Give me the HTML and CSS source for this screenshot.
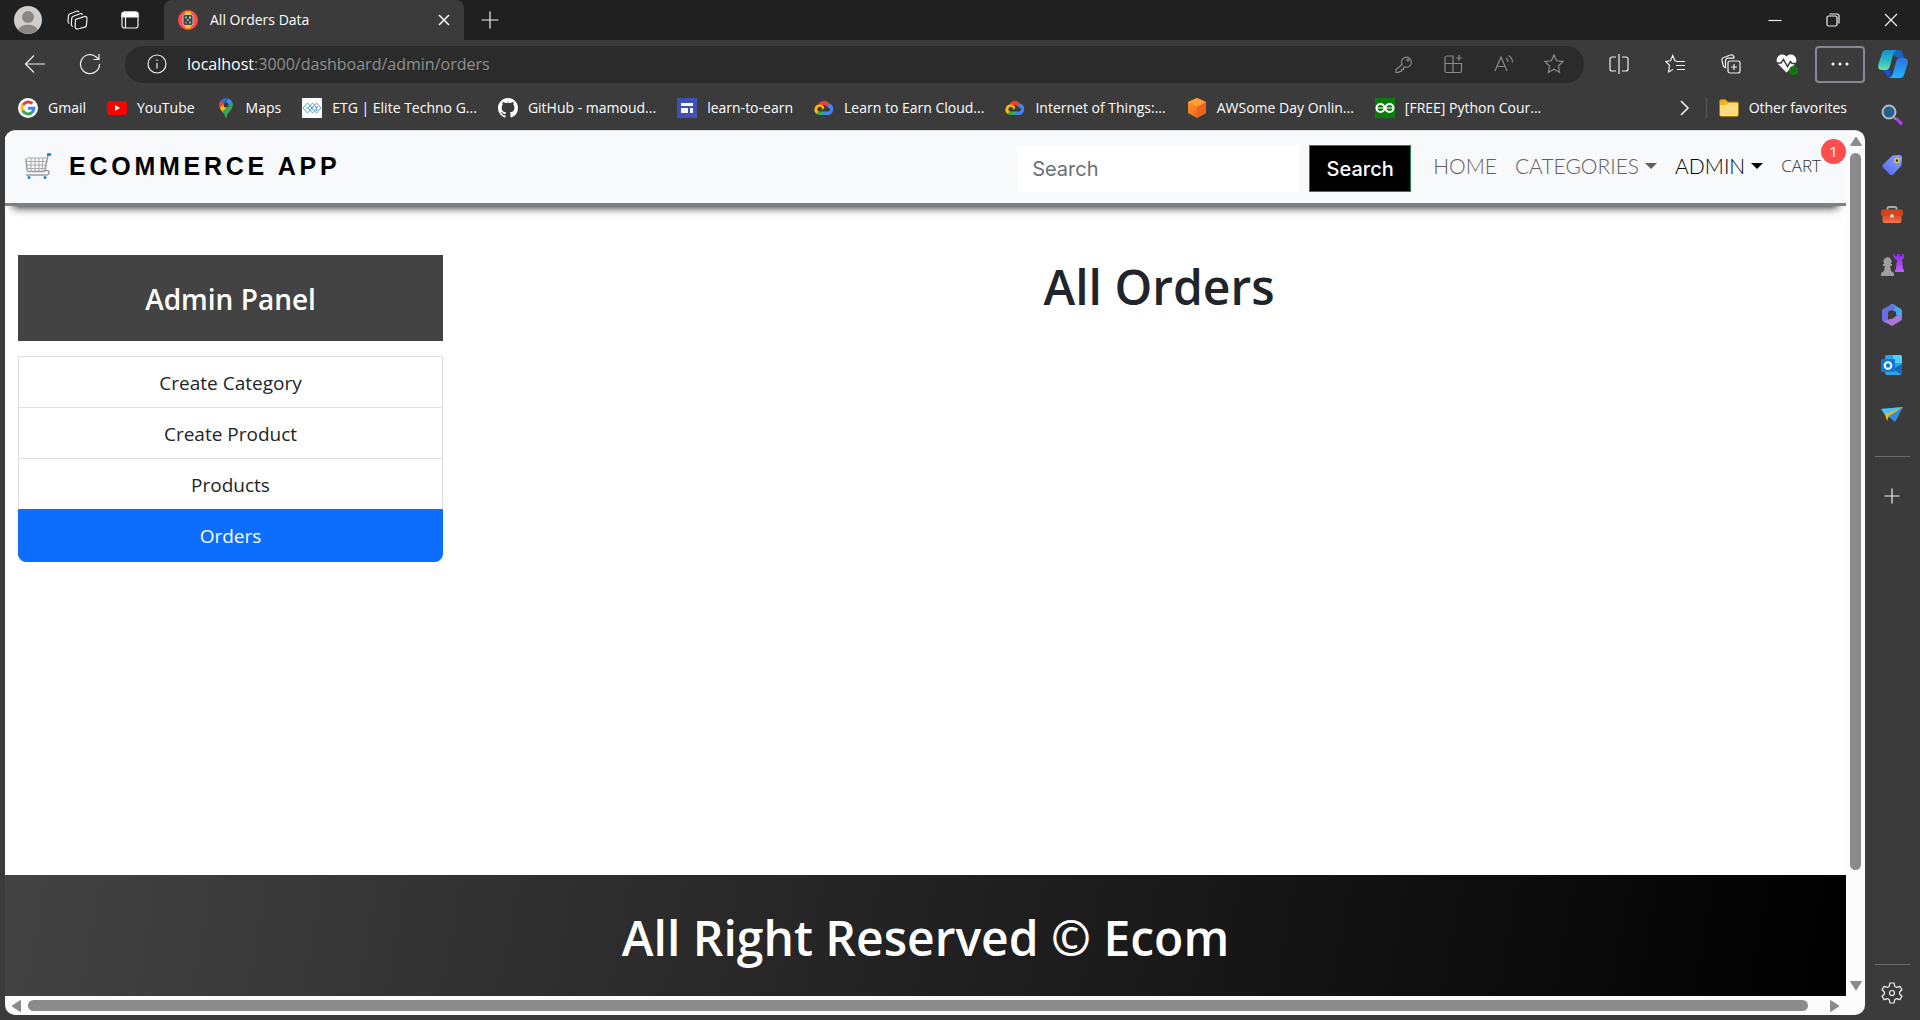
FILE: index.html
```html
<!DOCTYPE html>
<html lang="en">
<head>
<meta charset="utf-8">
<meta name="viewport" content="width=device-width, initial-scale=1">
<title>All Orders Data</title>
<link rel="stylesheet" href="styles.css">
</head>
<body class="browser">
<svg class="defs" width="0" height="0" aria-hidden="true">
  <defs>
    <linearGradient id="cpA" x1="0" y1="0" x2="0" y2="1"><stop offset="0" stop-color="#1490d0"/><stop offset=".5" stop-color="#2bb5c8"/><stop offset="1" stop-color="#6fe59a"/></linearGradient>
    <linearGradient id="cpB" x1="0" y1="0" x2="0" y2="1"><stop offset="0" stop-color="#2f6fe0"/><stop offset="1" stop-color="#1fb6ff"/></linearGradient>
    <linearGradient id="tag" x1="1" y1="0" x2="0" y2="1"><stop offset="0" stop-color="#7fa8ff"/><stop offset="1" stop-color="#5a62f2"/></linearGradient>
    <linearGradient id="case" x1="0" y1="0" x2="0" y2="1"><stop offset="0" stop-color="#d2451a"/><stop offset="1" stop-color="#f4714a"/></linearGradient>
    <linearGradient id="rook" x1="0" y1="0" x2="0" y2="1"><stop offset="0" stop-color="#8a2be8"/><stop offset="1" stop-color="#c65bff"/></linearGradient>
    <linearGradient id="aws" x1="0" y1="0" x2="1" y2="1"><stop offset="0" stop-color="#ff9a2e"/><stop offset="1" stop-color="#e8591a"/></linearGradient>
    <symbol id="gcloud" viewBox="0 0 20 20">
      <path d="M4 7.500A6.300 6.300 0 0 1 15.500 6L12.800 8.500A3.800 3.800 0 0 0 7.500 8Z" fill="#ea4335"/>
      <path d="M15.300 5.500A6 6 0 0 1 14.500 17H10v-3.500h4.500a1.800 1.800 0 0 0 .6-3.400L12.800 8.500Z" fill="#4285f4"/>
      <path d="M10 17H5.500a5.200 5.200 0 0 1-3-1L5 13.500h5Z" fill="#34a853"/>
      <path d="M2.500 16A5.200 5.200 0 0 1 5.500 6.600c2.400 0 4.200 1.300 5 3.100L8 12.200A2.400 2.400 0 1 0 5 13.500Z" fill="#fbbc05"/>
    </symbol>
  </defs>
</svg>

<header class="tabstrip">
  <button class="icon-btn avatar" aria-label="Profile"><svg width="28" height="28" viewBox="0 0 28 28"><circle cx="14" cy="14" r="14" fill="#d0cdca"/><circle cx="14" cy="11" r="6" fill="#8a8684"/><path d="M4 23.500a11 8 0 0 1 20 0A14 14 0 0 1 4 23.500Z" fill="#8a8684"/></svg></button>
  <button class="icon-btn" aria-label="Workspaces"><svg width="24" height="24" viewBox="0 0 24 24" class="line"><path d="M9.500 11.500 18 8.600a2 2 0 0 1 3 1.800l-.6 7a2 2 0 0 1-1.500 1.800L11.500 21a2 2 0 0 1-2.300-2l.3-7.500Z"/><path d="M7 18.500a2 2 0 0 1-1.700-2l.4-6a2.500 2.500 0 0 1 1.600-2.200l7-2.600a2 2 0 0 1 2.400.8"/><path d="M3.500 15.500A2 2 0 0 1 2 13.300L2.400 8A2.500 2.500 0 0 1 4 5.800l6.500-2.500a2 2 0 0 1 2.500.8"/></svg></button>
  <button class="icon-btn" aria-label="Tab actions"><svg width="20" height="20" viewBox="0 0 20 20" class="line"><rect x="2" y="2" width="16" height="16" rx="2.500"/><path d="M2 7V4a2 2 0 0 1 2-2h12a2 2 0 0 1 2 2v3Z" fill="#fff"/><path d="M5.500 7v11"/></svg></button>
  <div class="tab">
    <svg width="20" height="20" viewBox="0 0 20 20"><circle cx="10" cy="10" r="10" fill="#ff4b4b"/><path d="M7 1.500h6V5H7ZM7 15h6v3.500H7Z" fill="#ffc400"/><rect x="5" y="4.500" width="10" height="11" rx="2" fill="#394452" stroke="#c9c3b4"/><path d="M7 6.500h2v2H7Zm4 5h2v2h-2Z" fill="#6fcf5b"/><path d="M11 6.500h2v2h-2Z" fill="#f6c945"/><path d="M7 11.500h2v2H7Z" fill="#e65346"/><path d="M9 9h2v2H9Z" fill="#58a9e8"/></svg>
    <span class="tab-title">All Orders Data</span>
    <button class="icon-btn" aria-label="Close tab"><svg width="12" height="12" viewBox="0 0 12 12" class="line bold"><path d="m1 1 10 10M11 1 1 11"/></svg></button>
  </div>
  <button class="icon-btn new-tab" aria-label="New tab"><svg width="18" height="18" viewBox="0 0 18 18" class="line"><path d="M9 .5v17M.5 9h17"/></svg></button>
  <div class="window-controls">
    <button class="icon-btn" aria-label="Minimize"><svg width="14" height="14" viewBox="0 0 14 14" class="line"><path d="M.5 7.500h13"/></svg></button>
    <button class="icon-btn" aria-label="Restore"><svg width="14" height="14" viewBox="0 0 14 14" class="line"><rect x="1" y="3" width="10" height="10" rx="1.500"/><path d="M3.500 1H11a2 2 0 0 1 2 2v7.500"/></svg></button>
    <button class="icon-btn" aria-label="Close"><svg width="14" height="14" viewBox="0 0 14 14" class="line"><path d="m1 1 12 12M13 1 1 13"/></svg></button>
  </div>
</header>

<div class="toolbar">
  <button class="icon-btn nav-btn" aria-label="Back"><svg width="22" height="20" viewBox="0 0 22 20" class="line"><path d="M21 10H1.500M10 1.500 1.500 10l8.500 8.500"/></svg></button>
  <button class="icon-btn nav-btn" aria-label="Refresh"><svg width="22" height="22" viewBox="0 0 22 22" class="line"><path d="M20.500 11A9.500 9.500 0 1 1 17.500 4.200L19.500 6M20 1v5.500h-5.500"/></svg></button>
  <form class="address">
    <svg width="20" height="20" viewBox="0 0 20 20" class="line"><circle cx="10" cy="10" r="9"/><path d="M10 9v5.500M10 5.500V7"/></svg>
    <p class="url"><span class="host">localhost</span>:3000/dashboard/admin/orders</p>
    <button type="button" class="icon-btn dim" aria-label="Passwords"><svg width="20" height="20" viewBox="0 0 20 20" class="line"><path d="M8 10.500A5 5 0 1 1 11 13l-1.500.5v2H7.500v2H5.500l-1 1H2v-3Z"/><circle cx="14" cy="6" r="1"/></svg></button>
    <button type="button" class="icon-btn dim" aria-label="Apps"><svg width="20" height="20" viewBox="0 0 20 20" class="line"><path d="M9 9.500H1V4a2 2 0 0 1 2-2h6v16.500M1 9.500V17a1.500 1.500 0 0 0 1.500 1.500H16a1.500 1.500 0 0 0 1.500-1.500V9.500H9M15 1v6M12 4h6"/></svg></button>
    <button type="button" class="icon-btn dim" aria-label="Read aloud"><svg width="20" height="20" viewBox="0 0 20 20" class="line"><path d="m1 17 6-14 6 14M3 12.500h8M12 4c1.500 1 2 2.500 2 4M14.500 1.500C17 3 18.500 5.500 18.500 8.500"/></svg></button>
    <button type="button" class="icon-btn dim" aria-label="Add to favorites"><svg width="20" height="20" viewBox="0 0 20 20" class="line"><path d="m10 1 2.700 5.800 6.300.8-4.600 4.400 1.200 6.400L10 15.300 4.400 18.400l1.200-6.400L1 7.600l6.300-.8Z"/></svg></button>
  </form>
  <div class="tools">
    <button class="icon-btn" aria-label="Split screen"><svg width="20" height="20" viewBox="0 0 20 20" class="line"><path d="M7 3H3a2 2 0 0 0-2 2v10a2 2 0 0 0 2 2h4M13 3h4a2 2 0 0 1 2 2v10a2 2 0 0 1-2 2h-4M10 0v20"/></svg></button>
    <button class="icon-btn" aria-label="Favorites"><svg width="20" height="20" viewBox="0 0 20 20" class="line"><path d="m12 7.500-2-.7L7.700 1.500 5.500 6.800.8 7.500l3.700 3.800-1 6.700 4.500-2.500M12 7.500h8M11 11.500h9M12 15.500h8"/></svg></button>
    <button class="icon-btn" aria-label="Collections"><svg width="20" height="20" viewBox="0 0 20 20" class="line"><rect x="7" y="7" width="12" height="12" rx="2"/><path d="M13 10v6M10 13h6M4.500 14 3.200 13a2 2 0 0 1-1-1.400L1 6.500A2.500 2.500 0 0 1 2.700 3.500L9.500 1a2.500 2.500 0 0 1 3.200 1.500l.6 1.700M4.500 14V7A2.500 2.500 0 0 1 7 4.200h6"/></svg></button>
    <button class="icon-btn" aria-label="Browser essentials"><svg width="22" height="22" viewBox="0 0 22 22"><path d="M10.500 19.500 2 11A5.500 5.500 0 0 1 10.500 3.500 5.500 5.500 0 0 1 19 11Z" fill="#fff"/><path d="M0 10h5l2.500-3.500 4 7 3-5 1.500 2h5" fill="none" stroke="#3b3b3b" stroke-width="1.500"/><circle cx="17.500" cy="17.500" r="4.500" fill="#107c10"/><path d="m15.500 17.500 1.500 1.500 2.500-3" fill="none" stroke="#3b3b3b"/></svg></button>
  </div>
  <button class="more" aria-label="Settings and more"><svg width="18" height="4" viewBox="0 0 18 4" fill="#fff"><circle cx="2" cy="2" r="1.500"/><circle cx="9" cy="2" r="1.500"/><circle cx="16" cy="2" r="1.500"/></svg></button>
  <button class="icon-btn copilot" aria-label="Copilot"><svg width="30" height="28" viewBox="0 0 30 28"><path d="M13 4 17 0h4q3 0 4 4l1 4h-6Z" fill="#1464c0"/><path d="m4 20 9 0-1 8q-3-1-4-4Z" fill="#1a4fd0"/><path d="M8 0h11q-3 1-4 5l-3 11q-1 4-4 4H4q-5 0-3.500-6L4 3q1-3 4-3Z" fill="url(#cpA)"/><path d="M22 28H11q3-1 4-5l3-11q1-4 4-4h4q5 0 3.500 6L26 25q-1 3-4 3Z" fill="url(#cpB)"/></svg></button>
</div>

<div class="workspace">
  <div class="left">
    <nav class="bookmarks" aria-label="Favorites bar">
      <a href="#"><svg width="20" height="20" viewBox="0 0 20 20"><circle cx="10" cy="10" r="10" fill="#fff"/><g fill="none" stroke-width="3"><path d="M5 7a6 6 0 0 1 9.300-1.300" stroke="#ea4335"/><path d="M5 13.200A6 6 0 0 1 5 6.800" stroke="#fbbc05"/><path d="M14 14.500a6 6 0 0 1-9.200-1.700" stroke="#34a853"/><path d="M10 10.200h6a6 6 0 0 1-2.200 4.400" stroke="#4285f4"/></g></svg>Gmail</a>
      <a href="#"><svg width="20" height="20" viewBox="0 0 20 20"><rect y="3" width="20" height="14" rx="3.500" fill="#f00"/><path d="M8 7v6l5-3Z" fill="#fff"/></svg>YouTube</a>
      <a href="#"><svg width="20" height="20" viewBox="0 0 20 20"><path d="M4.600 2.600A7 7 0 0 1 12 .4L7.800 5.500Z" fill="#1a73e8"/><path d="M12 .4A7 7 0 0 1 16.300 4L10 11.500 7.500 9Z" fill="#4285f4"/><path d="M4.600 2.600 7.800 5.500 3.800 10A7 7 0 0 1 4.600 2.600Z" fill="#ea4335"/><path d="M3.800 10 8 5.200l4.500 3.500L6.300 14Z" fill="#fbbc05"/><path d="M16.300 4c1.500 4-.3 6.700-2.700 9.500C12 15.500 11 17 10.700 19.500H9.300C9 17 7.700 15.700 6.300 14Z" fill="#34a853"/><circle cx="10" cy="7" r="2.500" fill="#3b3b3b"/></svg>Maps</a>
      <a href="#"><svg width="20" height="20" viewBox="0 0 20 20"><path d="M0 0h20v20H0Z" fill="#fff"/><path d="m1 10 4.500-5 4.500 5-4.500 5Zm5 0 4.500-5L15 10l-4.500 5Zm4 0 4.500-5 4.500 5-4.500 5ZM4 10h3M10 8v4m3-3h3m-1.500 0v4" fill="none" stroke="#5b9fd8"/></svg>ETG | Elite Techno G...</a>
      <a href="#"><svg width="20" height="20" viewBox="0 0 16 16"><path fill="#fff" d="M8 0C3.580 0 0 3.580 0 8c0 3.540 2.290 6.530 5.470 7.590.4.070.55-.17.55-.38 0-.19-.01-.82-.01-1.490-2.010.37-2.530-.49-2.690-.94-.09-.23-.48-.94-.82-1.130-.28-.15-.68-.52-.01-.53.63-.01 1.080.58 1.230.82.72 1.210 1.870.87 2.330.66.07-.52.28-.87.51-1.070-1.780-.2-3.640-.89-3.640-3.950 0-.87.31-1.590.82-2.150-.08-.2-.36-1.020.08-2.120 0 0 .67-.21 2.200.82.64-.18 1.320-.27 2-.27s1.360.09 2 .27c1.530-1.040 2.200-.82 2.200-.82.44 1.100.16 1.920.08 2.120.51.56.82 1.270.82 2.150 0 3.070-1.870 3.750-3.650 3.950.29.25.54.73.54 1.480 0 1.070-.01 1.930-.01 2.200 0 .21.15.46.55.38A8.010 8.010 0 0 0 16 8c0-4.420-3.580-8-8-8Z"/></svg>GitHub - mamoud...</a>
      <a href="#"><svg width="20" height="20" viewBox="0 0 20 20"><path d="M0 0h20v20H0Z" fill="#3f51b5"/><path d="M4 5h12v3H4Zm0 5h7v5H4Zm9 0h3v5h-3Z" fill="#fff"/></svg>learn-to-earn</a>
      <a href="#"><svg width="20" height="20"><use href="#gcloud"/></svg>Learn to Earn Cloud...</a>
      <a href="#"><svg width="20" height="20"><use href="#gcloud"/></svg>Internet of Things:...</a>
      <a href="#"><svg width="20" height="20" viewBox="0 0 20 20"><path d="m10 0 9 4v11l-9 5-9-5V4Z" fill="url(#aws)"/><path d="m10 8.500 9-4.500v11l-9 5Z" fill="#e8641c"/><path d="m1 4 9-4 9 4-9 4.500Z" fill="#ffa033"/></svg>AWSome Day Onlin...</a>
      <a href="#"><svg width="20" height="20" viewBox="0 0 20 20"><path d="M0 0h20v20H0Z" fill="#0a7d0a"/><path d="M2 10h7M11 10h7" stroke="#fff" stroke-width="1"/><circle cx="5.500" cy="10" r="4" fill="none" stroke="#fff" stroke-width="2"/><circle cx="14.500" cy="10" r="4" fill="none" stroke="#fff" stroke-width="2"/></svg>[FREE] Python Cour...</a>
      <button class="icon-btn overflow" aria-label="More favorites"><svg width="10" height="16" viewBox="0 0 10 16" class="line bold"><path d="m1 1 7 7-7 7"/></svg></button>
      <a href="#" class="other"><svg width="20" height="20" viewBox="0 0 20 20"><path d="M.5 3.500a2 2 0 0 1 2-2h4L9 4h9a1.500 1.500 0 0 1 1.500 1.500v11A2 2 0 0 1 17.500 18.500h-15a2 2 0 0 1-2-2Z" fill="#f2b21d" stroke="#a87510"/><path d="M1 7h6l2.500-2H19v11.500a1.500 1.500 0 0 1-1.500 1.500h-15A1.500 1.500 0 0 1 1 16.500Z" fill="#ffdd7d"/></svg>Other favorites</a>
    </nav>

    <div class="viewport">
      <div class="page">
        <nav class="navbar">
          <a href="#" class="brand"><svg width="26" height="26" viewBox="0 0 26 26" fill="none"><path d="M1 5.500 2 17q.2 1.500 1.500 1.500h16L23 2.500" stroke="#9b9b9b" stroke-width="1.500"/><path d="M2 5h19.500M2 8.500h18.500M2 12h18M2.500 15.500H19M6 5v13M10 5v13M14 5v13M18 5l-1 13" stroke="#aaa"/><path d="M19.500 17.500h3q2.500 1 1 3.500-.5 1-2 1H1" stroke="#9b9b9b" stroke-width="1.500"/><path d="M22 1.500h4" stroke="#0a7fd0" stroke-width="2.500"/><circle cx="4" cy="24.500" r="1.500" fill="#1b83cf"/><circle cx="20" cy="24.500" r="1.500" fill="#1b83cf"/></svg>ECOMMERCE APP</a>
          <form class="search">
            <input type="search" placeholder="Search" aria-label="Search">
            <button type="button">Search</button>
          </form>
          <ul class="menu">
            <li><a href="#">HOME</a></li>
            <li><a href="#" class="dropdown">CATEGORIES</a></li>
            <li><a href="#" class="dropdown current">ADMIN</a></li>
            <li><a href="#" class="cart">CART<span class="badge">1</span></a></li>
          </ul>
        </nav>
        <div class="dashboard">
          <aside class="admin">
            <h4>Admin Panel</h4>
            <div class="list">
              <a href="#">Create Category</a>
              <a href="#">Create Product</a>
              <a href="#">Products</a>
              <a href="#" class="active">Orders</a>
            </div>
          </aside>
          <main class="orders"><h1>All Orders</h1></main>
        </div>
        <footer class="footer"><h1>All Right Reserved © Ecom</h1></footer>
      </div>
      <div class="vbar" aria-hidden="true">
        <svg width="12" height="10" viewBox="0 0 12 10"><path d="M6 1 11.500 9.500H.5Z" fill="#8b8b8b" stroke="#8b8b8b" stroke-linejoin="round"/></svg>
        <span class="thumb"></span>
        <svg width="12" height="10" viewBox="0 0 12 10"><path d="M6 9 .5.500h11Z" fill="#8b8b8b" stroke="#8b8b8b" stroke-linejoin="round"/></svg>
      </div>
      <div class="hbar" aria-hidden="true">
        <svg width="10" height="12" viewBox="0 0 10 12"><path d="M1 6 9.500.5v11Z" fill="#8b8b8b" stroke="#8b8b8b" stroke-linejoin="round"/></svg>
        <span class="thumb"></span>
        <svg width="10" height="12" viewBox="0 0 10 12"><path d="M9 6 .5 11.500V.5Z" fill="#8b8b8b" stroke="#8b8b8b" stroke-linejoin="round"/></svg>
      </div>
    </div>
  </div>

  <aside class="rail" aria-label="Sidebar">
    <button class="icon-btn" aria-label="Search"><svg width="22" height="22" viewBox="0 0 22 22"><path d="m14 15 2-2 6 6-2.500 2.500Z" fill="#b03df0"/><path d="m12.500 13 2.500 2.500" stroke="#999" stroke-width="2"/><circle cx="8" cy="8" r="6.500" fill="#21628c" stroke="#b8b8b8" stroke-width="2"/></svg></button>
    <button class="icon-btn" aria-label="Shopping"><svg width="22" height="22" viewBox="0 0 22 22"><path d="M11.500 1.500 18 1q3 0 3 3l-.5 6.500q0 1-1 2L12 20.500q-1.500 1.500-3 0l-7-7q-1.500-1.500 0-3Z" fill="url(#tag)"/><circle cx="16" cy="6.500" r="2" fill="#222" stroke="#f5c927" stroke-width="1.500"/></svg></button>
    <button class="icon-btn" aria-label="Tools"><svg width="22" height="22" viewBox="0 0 22 22"><path d="M6.500 6V4.500q0-1.500 1.500-1.500h6q1.500 0 1.500 1.500V6" fill="none" stroke="#aaa" stroke-width="2"/><path d="M1.500 10h19v7q0 2-2 2h-15q-2 0-2-2Z" fill="url(#case)"/><path d="M0 7q0-1.500 1.500-1.500h19Q22 5.500 22 7v4.500H0Z" fill="#cf4418"/><circle cx="11" cy="12" r="2" fill="#ccc"/></svg></button>
    <button class="icon-btn" aria-label="Games"><svg width="24" height="24" viewBox="0 0 24 24"><path d="M13 1h2v2h2V1h3v2h2V1h2v4l-2 2 1 9 1 1v2h-9v-2l1-1 1-9-3-2Z" fill="url(#rook)"/><path d="M1 23v-2q0-2 3-3l1-5H3v-2h1.500a4 4 0 1 1 6 0H12v2h-2l1 5q3 1 3 3v2Z" fill="#9f9f9f"/></svg></button>
    <button class="icon-btn" aria-label="Microsoft 365"><svg width="22" height="22" viewBox="0 0 22 22"><path d="M10 0q1-.5 2 0l8 5q1 .7 1 2v7.500L15 11V8L7.500 4Z" fill="#45a6ee"/><path d="m10.500 0-8.500 5Q1 5.700 1 7v8q0 1.500 1 2l3 2 3-3-1-1V8.500L15 4Z" fill="#6a6fe0"/><path d="m2 17 8 4.500q1 .5 2 0l8-5q1-.6 1-2.500l-2-2.500-4 .5-8 4Z" fill="#a879d8"/><path d="m7 8 2-1.500 6 4V12l-4 3-4-2.500Z" fill="#3b3b3b"/></svg></button>
    <button class="icon-btn" aria-label="Outlook"><svg width="22" height="22" viewBox="0 0 22 22"><path d="M4 3q0-2 2-2h13q2 0 2 2v16q0 2-2 2H6q-2 0-2-2Z" fill="#2aa5e8"/><path d="M12 1h7q2 0 2 2v6h-9Z" fill="#50d0ff"/><path d="m21 10-9 5 9 6Z" fill="#1368b4"/><rect y="5" width="14" height="13" rx="1" fill="#0f78d4"/><circle cx="7" cy="11.500" r="3.300" fill="none" stroke="#fff" stroke-width="2"/></svg></button>
    <button class="icon-btn" aria-label="Drop"><svg width="22" height="18" viewBox="0 0 22 18"><path d="M0 3 22 1 14 16 8 11Z" fill="#2f8de8"/><path d="M0 3 22 1 4 9Z" fill="#4cc2ff"/><path d="M22 1 4 8.500 6 15 8 10Z" fill="#f3b617"/></svg></button>
    <hr>
    <button class="icon-btn" aria-label="Customize"><svg width="16" height="16" viewBox="0 0 16 16" class="line"><path d="M8 .5v15M.5 8h15"/></svg></button>
    <hr class="push">
    <button class="icon-btn" aria-label="Settings"><svg width="22" height="22" viewBox="0 0 22 22" class="line"><path d="M9 1h4l.7 3.200 2 1.200 3.200-1L21 7.800 18.600 10v2l2.400 2.200-2.100 3.400-3.200-1-2 1.200L13 21H9l-.7-3.200-2-1.200-3.200 1L1 14.200 3.400 12v-2L1 7.800l2.100-3.400 3.200 1 2-1.200Z" stroke-linejoin="round"/><circle cx="11" cy="11" r="2.500"/></svg></button>
  </aside>
</div>
</body>
</html>
```
FILE: styles.css
```css
* { box-sizing: border-box; }

body, h1, h4, p, ul, hr { margin: 0; }

.browser {
  display: flex;
  flex-direction: column;
  min-height: 100vh;
  background: #3b3b3b;
  color: #fff;
  font: 14px/20px "Open Sans", "Noto Sans", sans-serif;
}

.defs { position: absolute; }
svg { display: block; flex: none; }
a { color: inherit; text-decoration: none; }
button { font: inherit; color: inherit; cursor: pointer; }

.icon-btn {
  display: flex;
  align-items: center;
  justify-content: center;
  flex: none;
  padding: 0;
  border: 0;
  background: none;
}

.line { fill: none; stroke: #f0f0f0; stroke-width: 1.2; }
.line.bold { stroke-width: 1.6; }
.dim .line { stroke: #8a8a8a; }

/* Tab strip */
.tabstrip {
  display: flex;
  height: 40px;
  background: #202020;
}
.tabstrip > .icon-btn { width: 52px; }
.tabstrip > .avatar { padding-left: 4px; }
.tab {
  display: flex;
  align-items: center;
  gap: 12px;
  width: 300px;
  margin-left: 8px;
  padding: 0 14px;
  border-radius: 8px 8px 0 0;
  background: #3b3b3b;
}
.tab-title { flex: 1; }
.window-controls { display: flex; margin-left: auto; }
.window-controls .icon-btn { width: 58px; }

/* Toolbar */
.toolbar {
  display: flex;
  align-items: center;
  height: 48px;
  padding: 0 12px 0 7px;
}
.nav-btn { width: 55px; }
.address {
  display: flex;
  flex: 1;
  align-items: center;
  height: 37px;
  margin-left: 8px;
  padding: 0 5px 0 22px;
  border-radius: 18px;
  background: #2b2b2b;
}
.url {
  flex: 1;
  margin-left: 20px;
  color: #8f8f8f;
  font-size: 16px;
  line-height: 24px;
}
.host { color: #fff; }
.address .icon-btn { width: 50px; }
.tools { display: flex; margin-left: 7px; }
.tools .icon-btn { width: 56px; }
.more {
  display: flex;
  align-items: center;
  justify-content: center;
  width: 50px;
  height: 37px;
  padding: 0;
  border: 2px solid #858a92;
  border-radius: 4px;
  background: none;
}
.copilot { width: 30px; margin-left: 13px; }

.workspace { display: flex; flex: 1; }
.left {
  display: flex;
  flex: 1;
  flex-direction: column;
  min-width: 0;
  padding: 0 0 5px 5px;
}

/* Favorites bar */
.bookmarks {
  display: flex;
  align-items: center;
  gap: 21px;
  height: 42px;
  padding: 0 18px 2px 13px;
  white-space: nowrap;
}
.bookmarks a { display: flex; align-items: center; gap: 10px; }
.bookmarks .overflow { margin-left: auto; width: 10px; }
.bookmarks .other { margin-left: -5px; padding-left: 12px; border-left: 1px solid #5c5c5c; }

/* Web page viewport with its scrollbars */
.viewport {
  display: grid;
  flex: 1;
  grid-template-columns: minmax(0, 1fr) 19px;
  grid-template-rows: 1fr 19px;
  overflow: hidden;
  border-top: 1px solid #dcdde0;
  border-radius: 10px;
  background: #fcfcfc;
}
.page {
  display: flex;
  flex-direction: column;
  overflow: hidden;
  background: #fff;
  color: #212529;
}
.vbar, .hbar { display: flex; align-items: center; }
.vbar { flex-direction: column; gap: 7px; padding: 5px 0; }
.hbar { gap: 7px; padding: 0 6px; }
.thumb { flex: 1; border-radius: 6px; background: #8b8b8b; }
.vbar .thumb { width: 11px; margin-bottom: 104px; }
.hbar .thumb { height: 11px; margin-right: 15px; }

/* Site navigation */
.navbar {
  display: flex;
  align-items: flex-start;
  height: 75px;
  padding: 14px 0 0 20px;
  border-bottom: 3px solid #808080;
  background: #f8f9fb;
  box-shadow: 0 10px 8px -8px #333;
}
.brand {
  display: flex;
  align-items: center;
  gap: 18px;
  height: 42px;
  margin-right: auto;
  color: #000;
  font: bold 25px/30px "Liberation Sans", Arial, sans-serif;
  letter-spacing: 0.15em;
}
.search { display: flex; gap: 10px; }
.search input,
.search button {
  height: 47px;
  border-radius: 0;
  font: 20px/30px Inter, sans-serif;
}
.search input {
  width: 282px;
  padding: 0 15px;
  border: 0;
  background: #fff;
  appearance: none;
}
.search input::placeholder { color: #6b6f73; opacity: 1; }
.search button {
  width: 102px;
  padding: 0;
  border: 1px solid #198754;
  background: #000;
  color: #fff;
  font-weight: 500;
}
.menu {
  display: flex;
  gap: 18px;
  padding: 0 25px 0 22px;
  list-style: none;
  color: #5f6062;
  font: 300 21px/42px Lato, sans-serif;
}
.menu a { display: flex; align-items: center; gap: 6px; }
.dropdown::after {
  content: "";
  border: 6px solid transparent;
  border-top-color: currentColor;
  border-bottom: 0;
}
.menu .current { color: #000; }
.menu .cart {
  position: relative;
  color: #333;
  font: 300 17px/42px "Open Sans", sans-serif;
}
.badge {
  position: absolute;
  left: 100%;
  top: -6px;
  width: 25px;
  height: 25px;
  border-radius: 50%;
  background: #ff4d4f;
  color: #fff;
  font: 15px/25px "Open Sans", sans-serif;
  text-align: center;
}

/* Dashboard */
.dashboard { display: flex; flex: 1; padding-top: 49px; }
.admin { width: 24.5%; padding: 0 13px; text-align: center; }
.admin h4 {
  padding: 29px 0 27px;
  background: #434343;
  color: #fff;
  font-size: 28px;
  font-weight: 600;
  line-height: 30px;
}
.list {
  margin-top: 15px;
  font-size: 19px;
  line-height: 30px;
}
.list a {
  display: block;
  padding: 11px 0 9px;
  border: 1px solid #dee2e6;
  border-bottom: 0;
}
.list .active {
  padding: 11px 0 10px;
  border: 1px solid #0d6efd;
  border-radius: 0 0 8px 8px;
  background: #0d6efd;
  color: #fff;
}
.orders { flex: 1; padding: 2px 0 0 16px; text-align: center; }
.orders h1, .footer h1 { font-size: 48px; font-weight: 600; line-height: 60px; }
.footer {
  padding: 33px 0 28px;
  background: linear-gradient(100deg, #434343, #000);
  color: #fff;
  text-align: center;
}

/* Edge sidebar */
.rail {
  display: flex;
  flex-direction: column;
  width: 55px;
  padding: 2px 1px 2px 0;
}
.rail .icon-btn { height: 50px; }
.rail hr { width: 35px; margin: 16px 10px 14px; border: 0; border-top: 1px solid #6b6b6b; }
.rail .push { margin: auto 10px 3px; }
```
